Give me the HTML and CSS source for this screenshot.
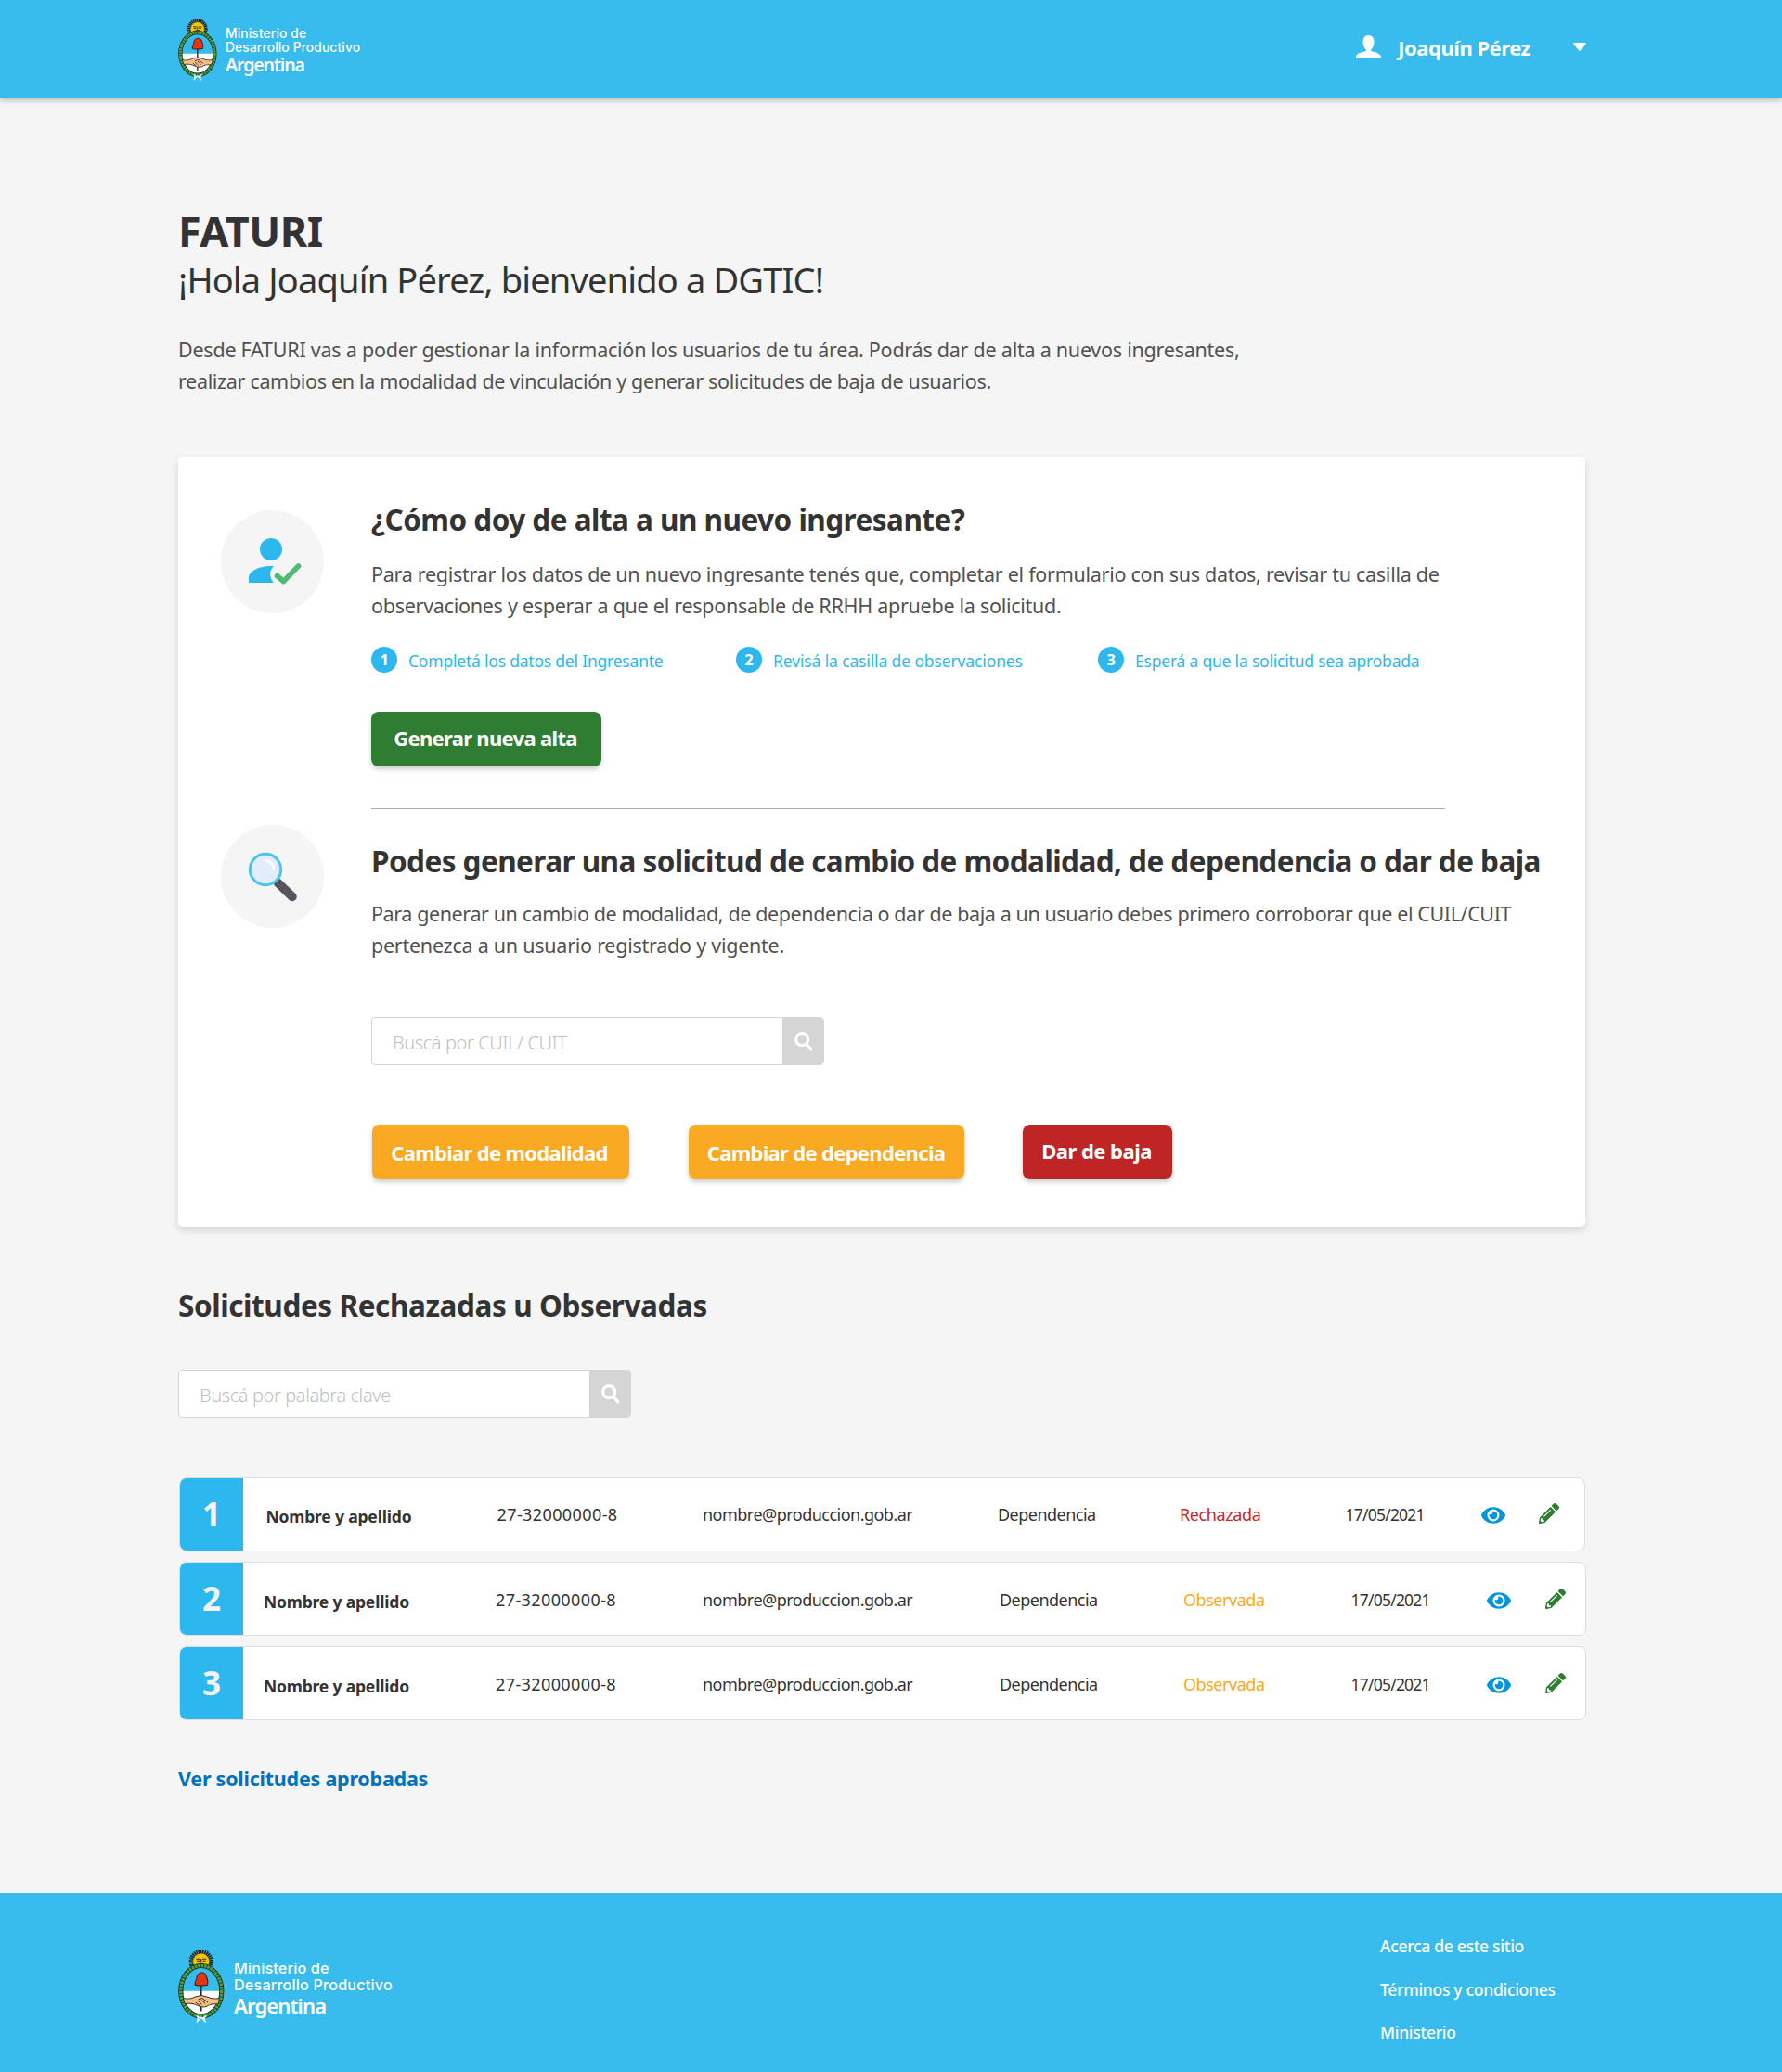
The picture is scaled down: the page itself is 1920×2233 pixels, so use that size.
FILE: index.html
```html
<!DOCTYPE html>
<html lang="es">
<head>
<meta charset="utf-8">
<title>FATURI</title>
<link rel="stylesheet" href="styles.css">
</head>
<body>

<svg class="sprite" aria-hidden="true">
  <symbol id="escudo" viewBox="0 0 50 79">
    <circle cx="24.7" cy="13" r="10.8" fill="none" stroke="#1d1d1b" stroke-width="4.600" stroke-dasharray="1.500 .760"/>
    <circle cx="24.7" cy="13" r="9" fill="#f8c300" stroke="#1d1d1b" stroke-width=".5"/>
    <path d="M19.200 10.200h4.300M26 10.200h4.300M24.700 10v3.500M22.200 14.600h5M20 12.200h3M26.600 12.200h3" stroke="#3b2d00" stroke-width="1.100" fill="none"/>
    <path d="M4.500 45a20.300 27 0 0 1 40.600 0z" fill="#37bbed"/>
    <path d="M4.500 44.700h40.600a20.300 27 0 0 1-40.600 0z" fill="#fff"/>
    <ellipse cx="24.800" cy="44.700" rx="22" ry="27.200" fill="none" stroke="#16261a" stroke-width="5.200"/>
    <ellipse cx="24.800" cy="44.700" rx="22" ry="27.200" fill="none" stroke="#4c9f45" stroke-width="3.600" stroke-dasharray="2.700 .700"/>
    <path d="M24.800 37v29.500" stroke="#1d1d1b" stroke-width="1.500"/>
    <path d="M18 38.200c-.3-3 1-4.700 2-6.500-.6-3 1.500-6.600 5.500-6.800 3.500 0 5 2.400 5.200 5.100 1.300 2.500 1.300 5.500.9 8.300-4 1-9.600 1-13.600-.1z" fill="#e63312" stroke="#1d1d1b" stroke-width="1"/>
    <path d="M5.300 52.500c5 1.400 9 .4 13.700-1.700l6-1.200 6 1.400c4.500 1.900 8.500 2.600 13.300 1.500l-1.300 6.500c-4.500-.7-7.500-.2-10.500 1.300-3 2.200-7.500 2-11 .3-4-2-8.500-3.200-14.300-2z" fill="#f6bd85" stroke="#1d1d1b" stroke-width=".9"/>
    <path d="M21.500 54l4.500-1.500 6 4.500M19 57l4 3.400M21.500 55.500l4.300 4M25 54.500l4.300 3.800" fill="none" stroke="#1d1d1b" stroke-width=".9"/>
    <path d="M19.500 71.500l4 2.500h3l4-2.500M24.800 73l-5 5.500M24.800 73l5 5.500M21 73.500v3M28.500 73.500v3" fill="none" stroke="#e4f5fd" stroke-width="1.500"/>
  </symbol>
  <symbol id="buscar" viewBox="0 0 20 21">
    <circle cx="8.200" cy="8.200" r="6.500" fill="none" stroke="#fff" stroke-width="3.200"/>
    <path d="M13 13.500l5 5.300" stroke="#fff" stroke-width="3.200" stroke-linecap="round"/>
  </symbol>
  <symbol id="ojo" viewBox="0 64 576 384">
    <path d="M572.52 241.4C518.29 135.59 410.93 64 288 64S57.68 135.64 3.48 241.41a32.35 32.35 0 0 0 0 29.19C57.71 376.41 165.07 448 288 448s230.32-71.64 284.52-177.41a32.35 32.35 0 0 0 0-29.19zM288 400a144 144 0 1 1 144-144 143.93 143.93 0 0 1-144 144zm0-240a95.31 95.31 0 0 0-25.31 3.79 47.85 47.85 0 0 1-66.9 66.9A95.78 95.78 0 1 0 288 160z" fill="#0095da"/>
  </symbol>
  <symbol id="lapiz" viewBox="0 0 512 512">
    <path d="M497.9 142.100l-46.100 46.100c-4.700 4.700-12.300 4.700-17 0l-111-111c-4.700-4.700-4.700-12.300 0-17l46.100-46.100c18.700-18.700 49.100-18.700 67.900 0l60.100 60.100c18.800 18.700 18.800 49.100 0 67.900zM284.200 99.800L21.600 362.400.4 483.900c-2.900 16.400 11.400 30.600 27.800 27.800l121.500-21.300 262.600-262.600c4.700-4.700 4.700-12.300 0-17l-111-111c-4.800-4.700-12.400-4.700-17.100 0zM124.100 339.900c-5.500-5.500-5.500-14.300 0-19.800l154-154c5.500-5.500 14.300-5.500 19.800 0s5.500 14.300 0 19.800l-154 154c-5.500 5.500-14.300 5.500-19.800 0zM88 424h48v36.300l-64.500 11.300-31.100-31.100L51.700 376H88v48z" fill="#2e7d33"/>
  </symbol>
</svg>

<header class="header">
  <div class="brand">
    <svg class="brand-shield"><use href="#escudo"/></svg>
    <div class="brand-text">
      <span>Ministerio de</span>
      <span>Desarrollo Productivo</span>
      <strong>Argentina</strong>
    </div>
  </div>
  <div class="user">
    <svg class="user-icon" viewBox="0 0 27 25"><path d="M13.500 0c3.600 0 6 2.600 6 7.200 0 3.800-1.400 6.600-3.300 8.300v1.700c5 .8 10 2.400 10.800 5.800v2H0v-2c.8-3.400 5.800-5 10.800-5.800v-1.700C8.900 13.800 7.500 11 7.500 7.200c0-4.600 2.400-7.200 6-7.200z" fill="#fff"/></svg>
    <span class="user-name">Joaquín Pérez</span>
    <svg class="user-caret" viewBox="0 0 14 9"><path d="M1 0h12q1.400.6.500 1.800L8 8.200q-1 1-2 0L.5 1.800Q-.4.600 1 0z" fill="#fff"/></svg>
  </div>
</header>

<main class="main">
  <h1 class="title">FATURI</h1>
  <p class="greeting">¡Hola Joaquín Pérez, bienvenido a DGTIC!</p>
  <p class="text intro">Desde FATURI vas a poder gestionar la información los usuarios de tu área. Podrás dar de alta a nuevos ingresantes,<br><span class="intro-end">realizar cambios en la modalidad de vinculación y generar solicitudes de baja de usuarios.</span></p>

  <section class="card">
    <div class="block block-new">
      <svg class="block-icon" viewBox="0 0 111 111">
        <circle cx="55.500" cy="55.500" r="55.500" fill="#f5f5f5"/>
        <circle cx="54" cy="42" r="12" fill="#2cb8ee"/>
        <path d="M30 78v-5.500C30 65.500 41 60 54 60h3q-8 8.500 0 18z" fill="#2cb8ee"/>
        <path d="M60.500 70.500l7 6L83.500 60" fill="none" stroke="#50b973" stroke-width="5.600" stroke-linecap="round" stroke-linejoin="round"/>
      </svg>
      <div class="block-body">
        <h2 class="heading">¿Cómo doy de alta a un nuevo ingresante?</h2>
        <p class="text">Para registrar los datos de un nuevo ingresante tenés que, completar el formulario con sus datos, revisar tu casilla de<br>observaciones y esperar a que el responsable de RRHH apruebe la solicitud.</p>
        <ol class="steps">
          <li class="step"><b class="step-num">1</b>Completá los datos del Ingresante</li>
          <li class="step step-wide"><b class="step-num">2</b>Revisá la casilla de observaciones</li>
          <li class="step"><b class="step-num">3</b>Esperá a que la solicitud sea aprobada</li>
        </ol>
        <button class="btn btn-green">Generar nueva alta</button>
        <hr class="divider">
      </div>
    </div>
    <div class="block block-change">
      <svg class="block-icon" viewBox="0 0 111 111">
        <circle cx="55.500" cy="55.500" r="55.500" fill="#f5f5f5"/>
        <path d="M61.500 62.500L77 77.500" stroke="#57545f" stroke-width="9.500" stroke-linecap="round"/>
        <path d="M57.500 62l4.500-4.500" stroke="#57545f" stroke-width="5"/>
        <circle cx="48" cy="48" r="16.700" fill="#e3ecfc" stroke="#48c6ef" stroke-width="3"/>
        <path d="M49 38.500q7.500 1.500 8 9.500" fill="none" stroke="#fff" stroke-width="2.600" stroke-linecap="round"/>
      </svg>
      <div class="block-body">
        <h2 class="heading heading-tight">Podes generar una solicitud de cambio de modalidad, de dependencia o dar de baja</h2>
        <p class="text text-tight">Para generar un cambio de modalidad, de dependencia o dar de baja a un usuario debes primero corroborar que el CUIL/CUIT<br><span class="text-end">pertenezca a un usuario registrado y vigente.</span></p>
        <div class="search">
          <input class="search-input" type="text" placeholder="Buscá por CUIL/ CUIT">
          <button class="search-btn" aria-label="Buscar"><svg><use href="#buscar"/></svg></button>
        </div>
        <div class="actions">
          <button class="btn btn-orange">Cambiar de modalidad</button>
          <button class="btn btn-orange btn-dep">Cambiar de dependencia</button>
          <button class="btn btn-red">Dar de baja</button>
        </div>
      </div>
    </div>
  </section>

  <h2 class="heading list-heading">Solicitudes Rechazadas u Observadas</h2>
  <div class="search list-search">
    <input class="search-input" type="text" placeholder="Buscá por palabra clave">
    <button class="search-btn" aria-label="Buscar"><svg><use href="#buscar"/></svg></button>
  </div>

  <div class="rows">
    <div class="row row-first">
      <div class="row-num">1</div>
      <div class="name">Nombre y apellido</div>
      <div class="cuit">27-32000000-8</div>
      <div class="mail">nombre@produccion.gob.ar</div>
      <div class="dep">Dependencia</div>
      <div class="rejected">Rechazada</div>
      <div class="date">17/05/2021</div>
      <svg class="eye"><use href="#ojo"/></svg>
      <svg class="pencil"><use href="#lapiz"/></svg>
    </div>
    <div class="row">
      <div class="row-num">2</div>
      <div class="name">Nombre y apellido</div>
      <div class="cuit">27-32000000-8</div>
      <div class="mail">nombre@produccion.gob.ar</div>
      <div class="dep">Dependencia</div>
      <div class="observed">Observada</div>
      <div class="date">17/05/2021</div>
      <svg class="eye"><use href="#ojo"/></svg>
      <svg class="pencil"><use href="#lapiz"/></svg>
    </div>
    <div class="row">
      <div class="row-num">3</div>
      <div class="name">Nombre y apellido</div>
      <div class="cuit">27-32000000-8</div>
      <div class="mail">nombre@produccion.gob.ar</div>
      <div class="dep">Dependencia</div>
      <div class="observed">Observada</div>
      <div class="date">17/05/2021</div>
      <svg class="eye"><use href="#ojo"/></svg>
      <svg class="pencil"><use href="#lapiz"/></svg>
    </div>
  </div>

  <a class="approved" href="#">Ver solicitudes aprobadas</a>
</main>

<footer class="footer">
  <div class="brand brand-large">
    <svg class="brand-shield"><use href="#escudo"/></svg>
    <div class="brand-text">
      <span>Ministerio de</span>
      <span>Desarrollo Productivo</span>
      <strong>Argentina</strong>
    </div>
  </div>
  <nav class="footer-links">
    <a href="#">Acerca de este sitio</a>
    <a href="#">Términos y condiciones</a>
    <a href="#">Ministerio</a>
  </nav>
</footer>

</body>
</html>
```

FILE: styles.css
```css
* { box-sizing: border-box; }

body {
  margin: 0;
  background: #f5f5f5;
  color: #333;
  font-family: "Noto Sans", sans-serif;
}

h1, h2, p, ol { margin: 0; padding: 0; }
a { text-decoration: none; }
button { border: 0; padding: 0; font-family: inherit; }
svg { display: block; }
.sprite { position: absolute; width: 0; height: 0; }

/* Header */
.header {
  display: flex;
  justify-content: space-between;
  height: 106px;
  padding: 0 211px 0 192px;
  background: #38bbed;
  box-shadow: 0 2px 6px rgba(0, 0, 0, .25);
}

.brand { display: flex; gap: 9px; padding-top: 19px; color: #fff; }
.brand-shield { width: 42px; height: 67px; margin-top: 1px; }
.brand-text {
  display: flex;
  flex-direction: column;
  font: 500 13.8px/15px Inter, sans-serif;
  letter-spacing: .13px;
  padding-top: 10px;
  white-space: nowrap;
}
.brand-text strong {
  font: 600 19.5px/22px "Noto Sans", sans-serif;
  letter-spacing: -1.1px;
}

.user { display: flex; align-items: flex-start; color: #fff; }
.user-icon { width: 27px; height: 25px; margin-top: 38px; }
.user-name {
  margin: 36px 46px 0 18px;
  font-size: 22px;
  font-weight: 700;
  line-height: 30px;
  letter-spacing: -.48px;
  white-space: nowrap;
}
.user-caret { width: 14px; height: 9px; margin-top: 46px; }

/* Intro */
.main { padding: 115px 212px 107px 192px; }
.title { font-size: 45px; font-weight: 700; line-height: 55px; letter-spacing: -.5px; }
.greeting { font-size: 38px; line-height: 50px; letter-spacing: -.84px; white-space: nowrap; }
.text {
  color: #515151;
  font-size: 21.5px;
  line-height: 34px;
  letter-spacing: -.27px;
  white-space: nowrap;
}
.text-tight { letter-spacing: -.4px; }
.text-end { letter-spacing: -.25px; }
.intro { margin-top: 34px; letter-spacing: -.24px; }
.intro-end { letter-spacing: -.33px; }

/* Card */
.card {
  height: 830px;
  margin-top: 64px;
  padding-left: 46px;
  background: #fff;
  border-radius: 5px;
  box-shadow: 0 4px 8px rgba(0, 0, 0, .13);
}
.block { display: flex; gap: 51px; }
.block-icon { flex: none; width: 111px; height: 111px; }
.block-new .block-icon { margin-top: 58px; }
.block-change .block-icon { margin-top: 17px; }
.block-new .block-body { padding-top: 48px; }
.block-change .block-body { padding-top: 36px; }

.heading {
  font-size: 31.5px;
  font-weight: 700;
  line-height: 40px;
  letter-spacing: -.53px;
  white-space: nowrap;
}
.heading-tight { letter-spacing: -.565px; }
.block-new .text { margin-top: 22px; }
.block-change .text { margin-top: 20px; }

.steps {
  display: grid;
  grid-template-columns: 393px 390px auto;
  margin-top: 27px;
  list-style: none;
}
.step {
  display: flex;
  align-items: center;
  gap: 12px;
  height: 28px;
  padding-top: 1px;
  color: #2cb8ee;
  font-size: 17.5px;
  line-height: 28px;
  letter-spacing: -.21px;
  white-space: nowrap;
}
.step-wide { letter-spacing: -.13px; }
.step-num {
  width: 28px;
  height: 28px;
  margin-top: -1px;
  border-radius: 50%;
  background: #2cb8ee;
  color: #fff;
  font-size: 16.5px;
  line-height: 28px;
  text-align: center;
}

.btn {
  height: 59px;
  padding-bottom: 3px;
  border-radius: 8px;
  color: #fff;
  font-size: 22px;
  font-weight: 700;
  letter-spacing: -.68px;
  white-space: nowrap;
  box-shadow: 0 3px 5px rgba(0, 0, 0, .2);
}
.btn-green { display: block; width: 248px; margin-top: 42px; padding: 0 2px 4px 0; background: #2e7d33; }
.btn-orange { width: 277px; padding: 1px 3px 0 0; background: #faa922; }
.btn-dep { width: 297px; padding-right: 1px; }
.btn-red { width: 161px; margin-left: -1px; padding-right: 2px; background: #be2525; letter-spacing: -.52px; }
.divider {
  width: 1157px;
  height: 1px;
  margin: 45px 0 0;
  border: 0;
  background: #ababab;
}

.search { display: flex; width: 488px; height: 52px; margin-top: 60px; }
.search-input {
  width: 443px;
  padding: 3px 22px 0;
  border: 1px solid #cfd3da;
  border-right: 0;
  border-radius: 5px 0 0 5px;
  background: #fff;
  font: 300 20px/28px "Noto Sans", sans-serif;
  letter-spacing: -.4px;
}
.search-input::placeholder { color: #c0c0c0; opacity: 1; }
.search-btn {
  display: flex;
  width: 45px;
  padding: 16px 0 0 13px;
  border-radius: 0 5px 5px 0;
  background: #d5d5d5;
}
.search-btn svg { width: 20px; height: 21px; }

.actions { display: flex; gap: 64px; margin: 64px 0 0 1px; }

/* Requests list */
.list-heading { margin-top: 65px; letter-spacing: -.41px; }
.list-search { margin-top: 49px; }

.rows { display: grid; gap: 11px; margin: 64px -1px 0 1px; }
.row {
  display: grid;
  grid-template-columns: 90px 250px 223px 320px 198px 180.5px 146px 63px 1fr;
  height: 80px;
  border: 1px solid #dedede;
  border-radius: 8px;
  background: #fff;
  color: #333;
  font-size: 18px;
  line-height: 26px;
  white-space: nowrap;
  overflow: hidden;
}
.row-first {
  grid-template-columns: 92.5px 249px 221.5px 318px 196px 178.5px 146px 62.5px 1fr;
  margin-right: 1px;
}
.row > div { padding-top: 27px; }
.row-first > div { padding-top: 26px; }
.row .row-num {
  width: 68px;
  padding-top: 16px;
  background: #2cb8ee;
  color: #f4f4f4;
  font-size: 35px;
  font-weight: 700;
  line-height: 46px;
  text-align: center;
}
.row .name { padding-top: 29px; font-weight: 700; font-size: 17.5px; letter-spacing: -.18px; }
.row-first .name { padding-top: 28px; }
.cuit { letter-spacing: .4px; }
.mail { letter-spacing: -.52px; }
.dep { letter-spacing: -.52px; }
.rejected { color: #c62828; letter-spacing: -.4px; }
.observed { color: #faa922; letter-spacing: -.46px; }
.date { font-size: 17.5px; letter-spacing: -.78px; }
.eye { width: 26px; height: 18px; margin-top: 32px; }
.pencil { width: 22px; height: 22px; margin-top: 28px; }
.row-first .eye { margin-top: 31px; }
.row-first .pencil { margin-top: 27px; }

.approved {
  display: block;
  margin-top: 46px;
  color: #0072bc;
  font-size: 21.5px;
  font-weight: 700;
  line-height: 34px;
  letter-spacing: -.24px;
}

/* Footer */
.footer {
  display: flex;
  justify-content: space-between;
  height: 193px;
  margin-top: -1px;
  padding-left: 192px;
  background: #38bbed;
}
.brand-large { gap: 10px; padding-top: 61px; }
.brand-large .brand-shield { width: 50px; height: 79px; margin-top: 0; }
.brand-large .brand-text { padding-top: 11px; font-size: 16.2px; letter-spacing: .18px; line-height: 18px; }
.brand-large strong { font-size: 22px; line-height: 26px; letter-spacing: -.85px; }

.footer-links {
  display: grid;
  align-content: start;
  width: 433px;
  padding-top: 34px;
}
.footer-links a {
  color: #fff;
  font-size: 17.5px;
  font-weight: 500;
  line-height: 46.5px;
  letter-spacing: -.3px;
}
```
